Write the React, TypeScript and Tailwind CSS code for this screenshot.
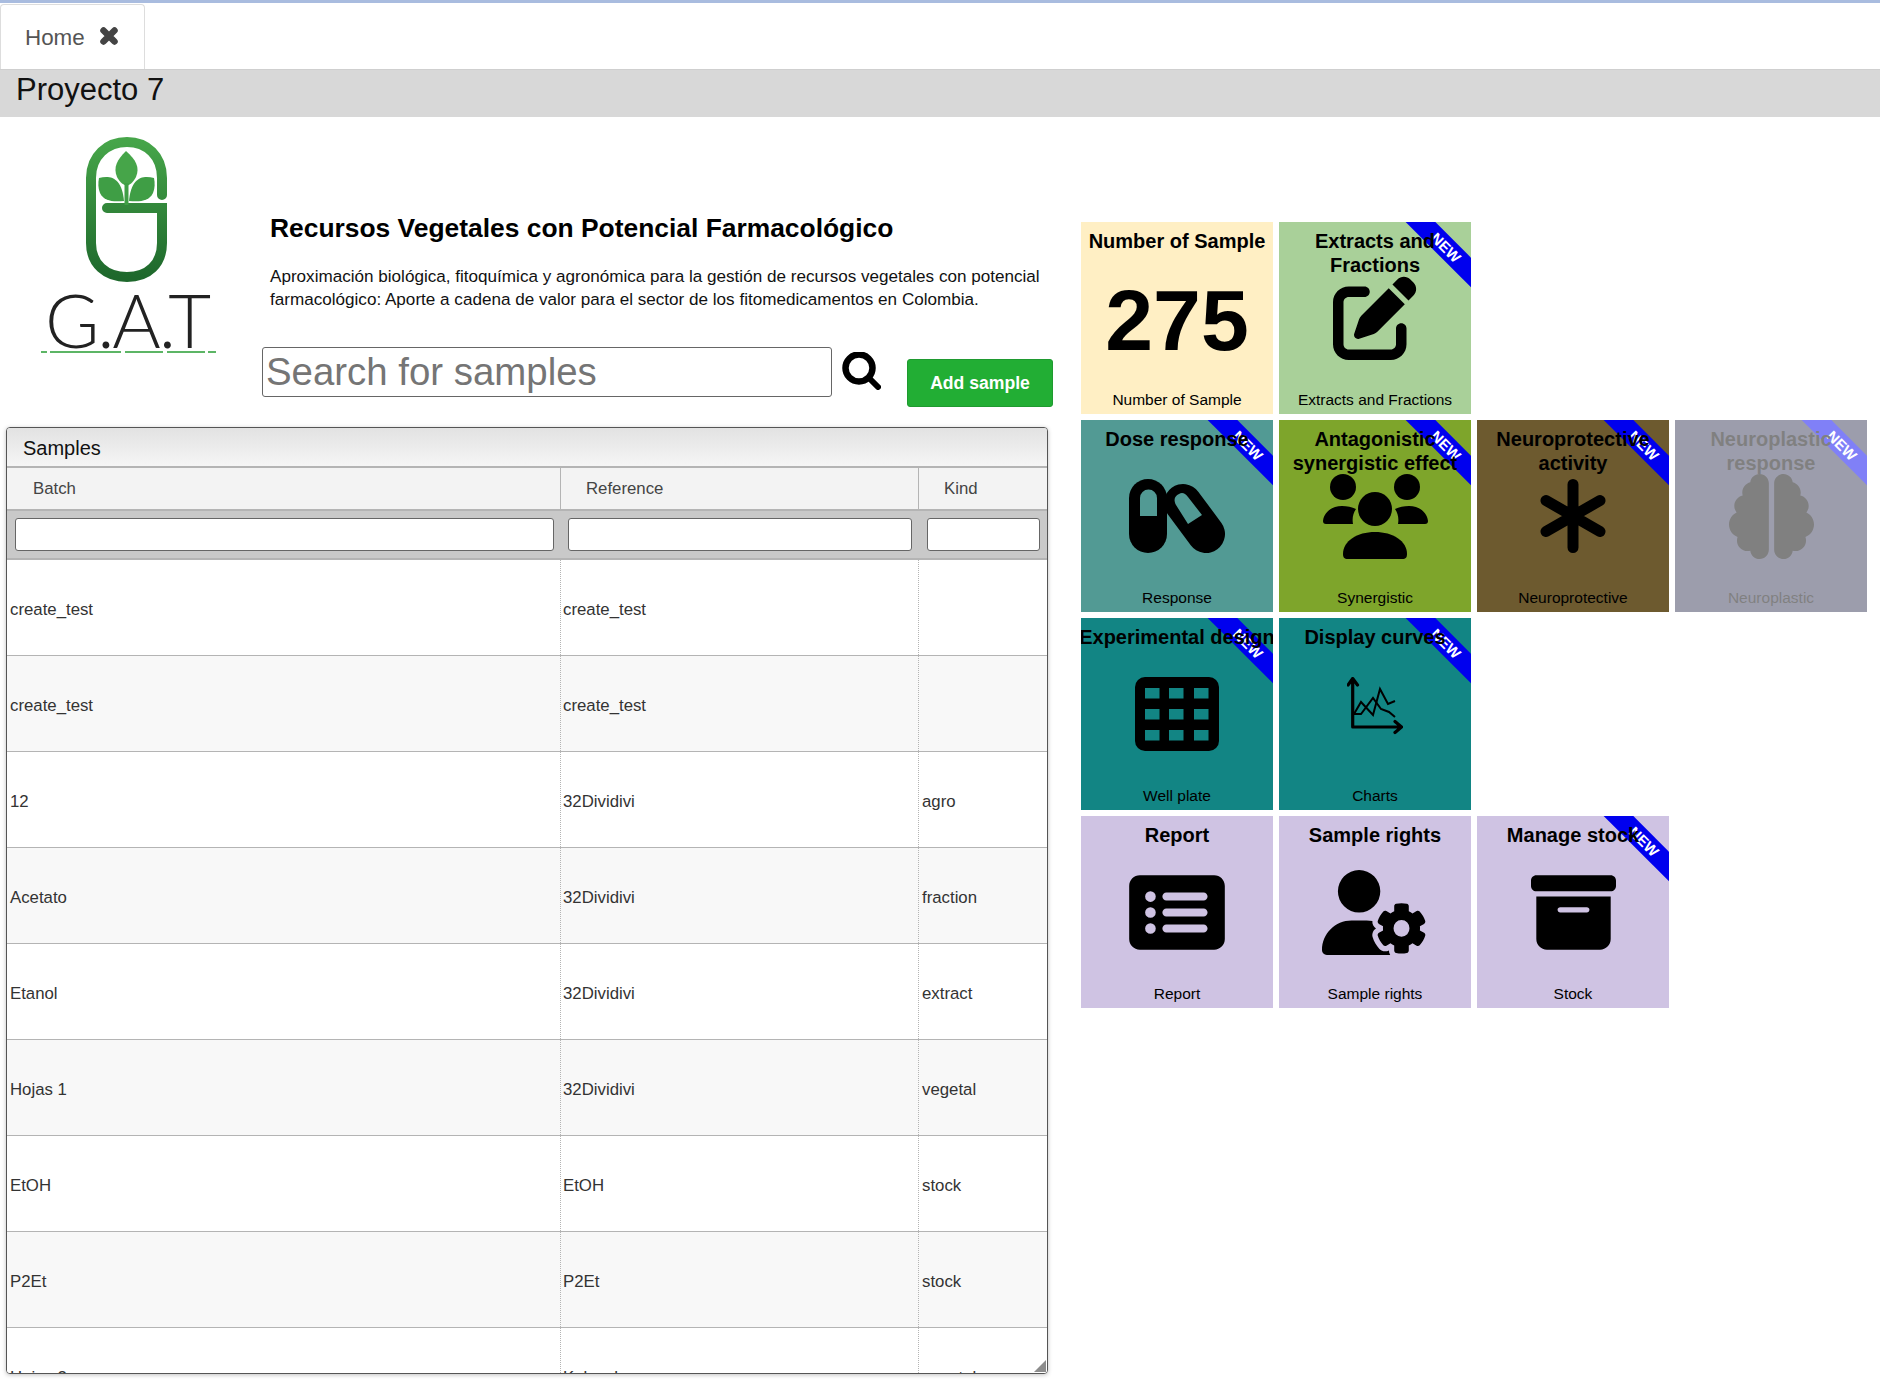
import type { ReactNode } from 'react';
import { FaBoxArchive, FaBrain, FaPenToSquare, FaRectangleList, FaUserGear } from 'react-icons/fa6';

const FONT = "font-['Liberation_Sans',Arial,sans-serif]";

type Row = { batch: string; reference: string; kind: string };

const rows: Row[] = [
  { batch: 'create_test', reference: 'create_test', kind: '' },
  { batch: 'create_test', reference: 'create_test', kind: '' },
  { batch: '12', reference: '32Dividivi', kind: 'agro' },
  { batch: 'Acetato', reference: '32Dividivi', kind: 'fraction' },
  { batch: 'Etanol', reference: '32Dividivi', kind: 'extract' },
  { batch: 'Hojas 1', reference: '32Dividivi', kind: 'vegetal' },
  { batch: 'EtOH', reference: 'EtOH', kind: 'stock' },
  { batch: 'P2Et', reference: 'P2Et', kind: 'stock' },
  { batch: 'Hojas 2', reference: 'Kalanchoe', kind: 'vegetal' },
];

function CloseIcon() {
  return (
    <svg viewBox="0 0 18 18" className="w-[18px] h-[18px]" stroke="#444444" strokeWidth="6.500" strokeLinecap="round">
      <path d="M3.500 3.500l11 11M14.500 3.500l-11 11" />
    </svg>
  );
}

function SearchIcon() {
  return (
    <svg viewBox="0 0 39 38" className="w-[39px] h-[38px]" fill="none" stroke="black" strokeLinecap="round">
      <circle cx="17" cy="16" r="13.500" strokeWidth="6.500" />
      <path d="M27 26L36 35" strokeWidth="6" />
    </svg>
  );
}

function PillsIcon() {
  return (
    <svg viewBox="0 0 96 74" className="w-[96px] h-[74px]">
      <path d="M19 19V55" stroke="black" strokeWidth="38" strokeLinecap="round" />
      <path d="M54 24L77 55" stroke="black" strokeWidth="38" strokeLinecap="round" />
      <path d="M11 37V19a8.500 8.500 0 0 1 17 0V37Z" fill="#529a94" />
      <path d="M47 26C44 20 46 17 50 15C53 13 56 14 59 18L73 36L59 45Z" fill="#529a94" />
    </svg>
  );
}

function GroupIcon() {
  return (
    <svg viewBox="0 0 105 85" className="w-[105px] h-[85px]">
      <circle cx="20" cy="13" r="13" />
      <circle cx="84" cy="13" r="13" />
      <circle cx="52" cy="35" r="17" />
      <path d="M25 85C21 85 20 83 20 80C20 67 34 58 52 58C70 58 84 67 84 80C84 83 83 85 79 85Z" />
      <path d="M3 50C1 50 0 49 0 47C1 38 9 32 19 32C24 32 29 33 33 35C30 39 29 45 30 50Z" />
      <path d="M102 50C104 50 105 49 105 47C104 38 96 32 86 32C81 32 76 33 72 35C75 39 76 45 75 50Z" />
    </svg>
  );
}

function AsteriskIcon() {
  return (
    <svg viewBox="0 0 66 74" className="w-[66px] h-[74px]" stroke="black" strokeWidth="11" strokeLinecap="round">
      <path d="M33 5.500V68.500M6 21.500L60 52.500M6 52.500L60 21.500" />
    </svg>
  );
}

function PlateIcon() {
  const xs = [10, 34, 59];
  const ys = [11, 32, 53];
  return (
    <svg viewBox="0 0 84 74" className="w-[84px] h-[74px]">
      <rect width="84" height="74" rx="10" />
      {ys.map((y) =>
        xs.map((x) => <rect key={`${x}-${y}`} x={x} y={y} width="14.500" height="10.500" fill="#128584" />),
      )}
    </svg>
  );
}

function ChartIcon() {
  return (
    <svg viewBox="0 0 56 58" className="w-[56px] h-[58px] mt-[-16px]" fill="none" stroke="black">
      <path d="M1 8L5.700 1.500L10.500 8M5.700 2V50H54M48 44.500L54.500 50L48 55.500" strokeWidth="3.200" strokeLinecap="round" strokeLinejoin="round" />
      <path d="M7 37L14 25L26 38L33 12L41 27L48 24" strokeWidth="2" />
      <path d="M7 37H14L26 21L34 32L42 35L48 40" strokeWidth="2" />
    </svg>
  );
}

function Logo() {
  return (
    <svg viewBox="0 0 262 240" className="w-[262px] h-[240px]">
      <defs>
        <linearGradient id="pill" x1="0" y1="0" x2="0" y2="1">
          <stop offset="0" stopColor="#46a549" />
          <stop offset="1" stopColor="#1e682c" />
        </linearGradient>
      </defs>
      <path
        d="M162 78V61C162 39 147 25 127 25S91 39 91 61V126C91 147 106 160 127 160S162 147 162 126V91H107"
        fill="none"
        stroke="url(#pill)"
        strokeWidth="10"
        strokeLinecap="round"
      />
      <path d="M126 34C136 43 140 50 136 60C133 66 129 68 127 69C124 68 120 66 117 60C113 50 117 43 126 34Z" fill="#46a549" />
      <path d="M99 61C110 58 122 60 124 84C112 85 104 84 100 76C98 71 98 66 99 61Z" fill="#3f9e45" />
      <path d="M154 61C143 58 131 60 129 84C141 85 149 84 153 76C155 71 155 66 154 61Z" fill="#3f9e45" />
      <path d="M126.500 66V88" stroke="#3f9e45" strokeWidth="4" />
      <text x="45" y="231" fontFamily="Lato, sans-serif" fontWeight="300" fontSize="74" fill="#222" textLength="166">
        G.A.T
      </text>
      <path d="M41 235h6M50 235h8M55 235h66M125 235h38M167 235h38M208 235h8" stroke="#5cb565" strokeWidth="2" />
    </svg>
  );
}

function Card({
  title,
  label,
  color,
  icon,
  isNew,
  faded,
}: {
  title: string;
  label: string;
  color: string;
  icon: ReactNode;
  isNew?: boolean;
  faded?: boolean;
}) {
  return (
    <div className={`relative w-[192px] h-[192px] overflow-hidden flex flex-col items-center text-center text-black ${color}`}>
      {isNew && (
        <div className="absolute top-[15px] right-[-35px] w-[120px] h-[21px] rotate-45 bg-[#0000ee] text-white text-[15px] leading-[21px] font-bold text-center">
          <span>NEW</span>
        </div>
      )}
      <div className="relative h-[54px] w-full pt-[7px] text-[20px] leading-[24px] font-bold whitespace-pre flex flex-col items-center">{title}</div>
      <div className="relative h-[84px] w-full flex items-center justify-center">{icon}</div>
      <div className="relative mt-auto pb-[2px] text-[15.500px] leading-[24px]">{label}</div>
      {faded && <div className="absolute inset-0 bg-white/50" />}
    </div>
  );
}

export default function App() {
  return (
    <div className={`${FONT} w-full min-h-[1382px] bg-white text-black`}>
      <div className="h-[3px] bg-[#a9bcdf]" />

      <div className="h-[66px] pt-[1px] flex items-end">
        <div className="h-[65px] w-[145px] border border-b-0 border-[#dddddd] rounded-t-[4px] pl-[24px] pt-[18px] flex items-start gap-[15px] text-[22.400px] leading-[30px] text-[#555555]">
          <span>Home</span>
          <div className="mt-[4px]">
            <CloseIcon />
          </div>
        </div>
      </div>

      <div className="h-[48px] bg-[#d8d8d8] border-t border-[#cfcfcf] pl-[16px] text-[31px] leading-[40px] text-[#111111]">Proyecto 7</div>

      <div className="flex items-start">
        <div className="w-[1081px] shrink-0">
          <div className="flex items-start h-[310px]">
            <div className="w-[262px] shrink-0">
              <Logo />
            </div>
            <div className="flex-1">
              <div className="pl-[8px] pt-[94px]">
                <h1 className="text-[26.400px] leading-[34px] font-bold text-black">Recursos Vegetales con Potencial Farmacológico</h1>
                <p className="mt-[20px] text-[17.100px] leading-[23px] text-[#111111] w-[790px]">
                  Aproximación biológica, fitoquímica y agronómica para la gestión de recursos vegetales con potencial farmacológico: Aporte a cadena de valor para el sector de los fitomedicamentos en Colombia.
                </p>
              </div>
              <div className="flex items-start mt-[36px]">
                <input
                  placeholder="Search for samples"
                  className="w-[570px] h-[50px] border border-[#666666] rounded-[3px] px-[3px] text-[38.400px] placeholder:text-[#757575] outline-none"
                />
                <div className="ml-[10px] mt-[5px]">
                  <SearchIcon />
                </div>
                <button className="ml-[26px] mt-[12px] w-[146px] h-[48px] rounded-[3px] bg-[#22ae34] border border-[#1f9a30] text-white text-[17.600px] font-bold">
                  Add sample
                </button>
              </div>
            </div>
          </div>

          <div className="ml-[6px] w-[1042px] h-[947px] border border-[#555555] rounded-[4px] shadow-[0_1px_4px_rgba(0,0,0,0.25)] overflow-hidden relative bg-white">
            <div className="h-[40px] bg-gradient-to-b from-[#e2e2e2] to-[#f5f5f5] border-b-2 border-[#b4b4b4] pl-[16px] text-[20px] leading-[41px] text-[#111111]">Samples</div>
            <div className="flex h-[41px] bg-[#f3f3f3] text-[16.800px] leading-[41px] text-[#444444]">
              <div className="w-[554px] shrink-0 border-r border-[#b4b4b4] pl-[26px]">Batch</div>
              <div className="w-[358px] shrink-0 border-r border-[#b4b4b4] pl-[25px]">Reference</div>
              <div className="flex-1 pl-[25px]">Kind</div>
            </div>
            <div className="flex h-[51px] bg-[#c9c9c9] border-y-2 border-[#b4b4b4] items-center">
              <div className="w-[554px] shrink-0 pl-[8px] pr-[7px]">
                <input className="block w-full h-[33px] bg-white border border-[#666666] rounded-[3px]" />
              </div>
              <div className="w-[358px] shrink-0 pl-[7px] pr-[7px]">
                <input className="block w-full h-[33px] bg-white border border-[#666666] rounded-[3px]" />
              </div>
              <div className="flex-1 pl-[8px] pr-[7px]">
                <input className="block w-full h-[33px] bg-white border border-[#666666] rounded-[3px]" />
              </div>
            </div>
            {rows.map((row, i) => (
              <div
                key={i}
                className={`flex h-[96px] border-b border-[#b4b4b4] text-[16.800px] leading-[100px] text-[#333333] ${i % 2 === 1 ? 'bg-[#f8f8f8]' : 'bg-white'}`}
              >
                <div className="w-[554px] shrink-0 border-r border-dotted border-[#b4b4b4] pl-[3px]">{row.batch}</div>
                <div className="w-[358px] shrink-0 border-r border-dotted border-[#b4b4b4] pl-[2px]">{row.reference}</div>
                <div className="flex-1 pl-[3px]">{row.kind}</div>
              </div>
            ))}
            <div className="absolute right-[1px] bottom-[1px] w-0 h-0 border-l-[12px] border-l-transparent border-b-[12px] border-b-[#8c8c8c]" />
          </div>
        </div>

        <div className="pt-[105px] flex flex-col gap-[6px]">
          <div className="flex gap-[6px]">
            <Card
              title="Number of Sample"
              label="Number of Sample"
              color="bg-[#ffefc4]"
              icon={<span className="pt-[4px] text-[86px] leading-none font-bold">275</span>}
            />
            <Card
              title={'Extracts and\nFractions'}
              label="Extracts and Fractions"
              color="bg-[#a9d099]"
              icon={<FaPenToSquare className="w-[84px] h-[84px]" />}
              isNew
            />
          </div>
          <div className="flex gap-[6px]">
            <Card title="Dose response" label="Response" color="bg-[#529a94]" icon={<PillsIcon />} isNew />
            <Card title={'Antagonistic\nsynergistic effect'} label="Synergistic" color="bg-[#7ea52b]" icon={<GroupIcon />} isNew />
            <Card title={'Neuroprotective\nactivity'} label="Neuroprotective" color="bg-[#6d5a2f]" icon={<AsteriskIcon />} isNew />
            <Card
              title={'Neuroplastic\nresponse'}
              label="Neuroplastic"
              color="bg-[#393b59]"
              icon={<FaBrain className="w-[85px] h-[85px]" />}
              isNew
              faded
            />
          </div>
          <div className="flex gap-[6px]">
            <Card title="Experimental design" label="Well plate" color="bg-[#128584]" icon={<PlateIcon />} isNew />
            <Card title="Display curves" label="Charts" color="bg-[#128584]" icon={<ChartIcon />} isNew />
          </div>
          <div className="flex gap-[6px]">
            <Card title="Report" label="Report" color="bg-[#cfc3e3]" icon={<FaRectangleList className="w-[96px] h-[85px]" />} />
            <Card title="Sample rights" label="Sample rights" color="bg-[#cfc3e3]" icon={<FaUserGear className="w-[106px] h-[85px]" />} />
            <Card title="Manage stock" label="Stock" color="bg-[#cfc3e3]" icon={<FaBoxArchive className="w-[85px] h-[85px]" />} isNew />
          </div>
        </div>
      </div>
    </div>
  );
}
